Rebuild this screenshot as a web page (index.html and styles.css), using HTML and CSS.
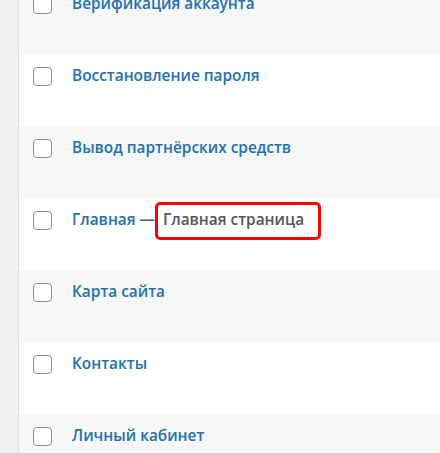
FILE: index.html
```html
<!DOCTYPE html>
<html lang="ru">
<head>
<meta charset="utf-8">
<link rel="stylesheet" href="styles.css">
</head>
<body>
<div class="layout">
  <div class="sidebar"></div>
  <div class="list">
    <div class="rows">
      <div class="row alt"><span class="check"></span><div class="title"><a class="link" href="#">Верификация аккаунта</a></div></div>
      <div class="row"><span class="check"></span><div class="title"><a class="link" href="#">Восстановление пароля</a></div></div>
      <div class="row alt"><span class="check"></span><div class="title"><a class="link" href="#">Вывод партнёрских средств</a></div></div>
      <div class="row"><span class="check"></span><div class="title"><a class="link" href="#">Главная</a><span class="state"> —<span class="mark">Главная страница</span></span></div></div>
      <div class="row alt"><span class="check"></span><div class="title"><a class="link" href="#">Карта сайта</a></div></div>
      <div class="row"><span class="check"></span><div class="title"><a class="link" href="#">Контакты</a></div></div>
      <div class="row alt"><span class="check"></span><div class="title"><a class="link" href="#">Личный кабинет</a></div></div>
    </div>
  </div>
</div>
</body>
</html>
```
FILE: styles.css
```css
html, body {
  margin: 0;
  padding: 0;
  height: 100%;
  overflow: hidden;
  background: #ffffff;
}
.layout {
  display: flex;
  height: 453px;
  font-family: "Open Sans", "Noto Sans", sans-serif;
  font-size: 15.4px;
}
.sidebar {
  width: 18px;
  flex: none;
  background: #f0f0f1;
  border-right: 1px solid #dcdcde;
}
.list {
  flex: 1;
  overflow: hidden;
}
.rows {
  margin-top: -18px;
}
.row {
  display: flex;
  align-items: flex-start;
  height: 72px;
  box-sizing: border-box;
  background: #ffffff;
}
.row.alt {
  background: #f6f7f7;
}
.check {
  flex: none;
  width: 19px;
  height: 19px;
  box-sizing: border-box;
  margin: 13px 0 0 14px;
  border: 1px solid #8c8f94;
  border-radius: 4px;
  background: #ffffff;
}
.title {
  margin: 11px 0 0 20px;
  line-height: 22px;
  font-weight: 600;
  white-space: nowrap;
}
.link {
  color: #2271b1;
  text-decoration: none;
}
.state {
  color: #50575e;
}
.mark {
  padding: 4px 14px 7px 5px;
  border: 3px solid #ff0000;
  border-radius: 5px;
}
```
